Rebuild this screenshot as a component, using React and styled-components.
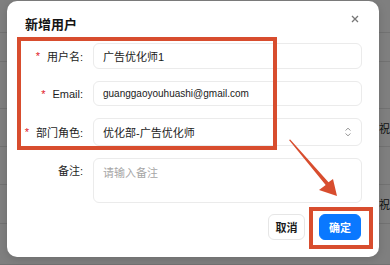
import styled, { createGlobalStyle } from 'styled-components';

const GlobalStyle = createGlobalStyle`
  * { box-sizing: border-box; }
  body {
    margin: 0;
    background: #7f7f7f;
    font-family: "Liberation Sans", "Noto Sans CJK SC", sans-serif;
    overflow: hidden;
  }
`;

const Page = styled.div`
  position: relative;
  width: 390px;
  height: 265px;
  overflow: hidden;
`;

const Table = styled.div`
  display: flex;
  flex-direction: column;
`;

const TableRow = styled.div`
  height: ${(p) => p.$h}px;
  border-bottom: 1px solid #727272;
  display: flex;
  align-items: center;
  justify-content: flex-end;
  font-size: 11px;
  color: #111;
  white-space: nowrap;
`;

const Modal = styled.div`
  position: absolute;
  left: 7px;
  top: 1px;
  width: 372px;
  height: 256px;
  background: #fff;
  border-radius: 10px;
  box-shadow: 0 2px 8px rgba(0, 0, 0, 0.15);
  display: flex;
  flex-direction: column;
`;

const Header = styled.div`
  padding: 15px 18px 0;
  display: flex;
  align-items: center;
  justify-content: space-between;
`;

const Title = styled.h2`
  margin: 0;
  font-size: 13px;
  line-height: 18px;
  font-weight: 700;
  color: #141414;
`;

const Close = styled.button`
  border: 0;
  background: none;
  padding: 0;
  width: 12px;
  height: 12px;
  margin-top: -12px;
  display: flex;
  align-items: center;
  justify-content: center;
`;

const Form = styled.div`
  margin-top: 9px;
  padding: 0 17px 0 18px;
  display: grid;
  grid-template-columns: 58px 1fr;
  column-gap: 10px;
  row-gap: 12px;
  align-items: center;
`;

const Label = styled.label`
  justify-self: end;
  align-self: ${(p) => (p.$top ? 'start' : 'center')};
  line-height: ${(p) => (p.$top ? '26px' : 'normal')};
  font-size: 11px;
  color: #1d1d1d;
  white-space: nowrap;
  display: flex;
  align-items: center;
`;

const Star = styled.span`
  color: #e0161e;
  margin-right: 7px;
  font-size: 11px;
`;

const Field = styled.div`
  height: ${(p) => p.$h}px;
  border: 1px solid #ebebeb;
  border-radius: 6px;
  padding: 0 9px;
  display: flex;
  align-items: ${(p) => (p.$area ? 'flex-start' : 'center')};
  justify-content: space-between;
  padding-top: ${(p) => (p.$area ? '5px' : '0')};
  font-size: ${(p) => (p.$small ? '10px' : '11px')};
  color: ${(p) => (p.$placeholder ? '#a6a6a6' : '#1a1a1a')};
`;

const Footer = styled.div`
  margin-top: 11px;
  padding-right: 18px;
  display: flex;
  justify-content: flex-end;
  gap: 14px;
`;

const Button = styled.button`
  height: 26px;
  width: ${(p) => p.$w}px;
  border-radius: 6px;
  font-family: inherit;
  font-size: 11px;
  font-weight: 600;
  border: 1px solid ${(p) => (p.$primary ? '#0a78ff' : '#e6e6e6')};
  background: ${(p) => (p.$primary ? '#0a78ff' : '#fff')};
  color: ${(p) => (p.$primary ? '#fff' : '#1a1a1a')};
  padding: 0;
`;

const Mark = styled.div`
  position: absolute;
  left: ${(p) => p.$x}px;
  top: ${(p) => p.$y}px;
  width: ${(p) => p.$w}px;
  height: ${(p) => p.$h}px;
  border: 4px solid #d84d2e;
  pointer-events: none;
`;

const ArrowSvg = styled.svg`
  position: absolute;
  left: 0;
  top: 0;
  pointer-events: none;
`;

const rows = [33, 29, 47, 38, 38, 39, 41];

export default function App() {
  return (
    <Page>
      <GlobalStyle />
      <Table>
        {rows.map((h, i) => (
          <TableRow key={i} $h={h}>
            {(i === 3 || i === 5) && '祝'}
          </TableRow>
        ))}
      </Table>

      <Modal>
        <Header>
          <Title>新增用户</Title>
          <Close aria-label="close">
            <svg width="8" height="8" viewBox="0 0 8 8">
              <path d="M1 1L7 7M7 1L1 7" stroke="#777" strokeWidth="1.3" />
            </svg>
          </Close>
        </Header>

        <Form>
          <Label>
            <Star>*</Star>用户名:
          </Label>
          <Field $h={26}>广告优化师1</Field>

          <Label>
            <Star>*</Star>Email:
          </Label>
          <Field $h={25} $small>
            guanggaoyouhuashi@gmail.com
          </Field>

          <Label>
            <Star>*</Star>部门角色:
          </Label>
          <Field $h={28}>
            优化部-广告优化师
            <svg width="8" height="10" viewBox="0 0 8 10">
              <path
                d="M1.5 3.5L4 1.2L6.5 3.5M1.5 6.5L4 8.8L6.5 6.5"
                fill="none"
                stroke="#999"
                strokeWidth="1"
              />
            </svg>
          </Field>

          <Label $top>备注:</Label>
          <Field $h={45} $area $placeholder>
            请输入备注
          </Field>
        </Form>

        <Footer>
          <Button $w={37}>取消</Button>
          <Button $w={42} $primary>
            确定
          </Button>
        </Footer>
      </Modal>

      <Mark $x={17} $y={37} $w={260} $h={113} />
      <Mark $x={309} $y={207} $w={64} $h={42} />

      <ArrowSvg width="390" height="265" viewBox="0 0 390 265">
        <polygon
          points="289,140 290.2,139.4 328.5,182.3 333,179 337,196 319,190 325.7,185"
          fill="#d84d2e"
        />
      </ArrowSvg>
    </Page>
  );
}
